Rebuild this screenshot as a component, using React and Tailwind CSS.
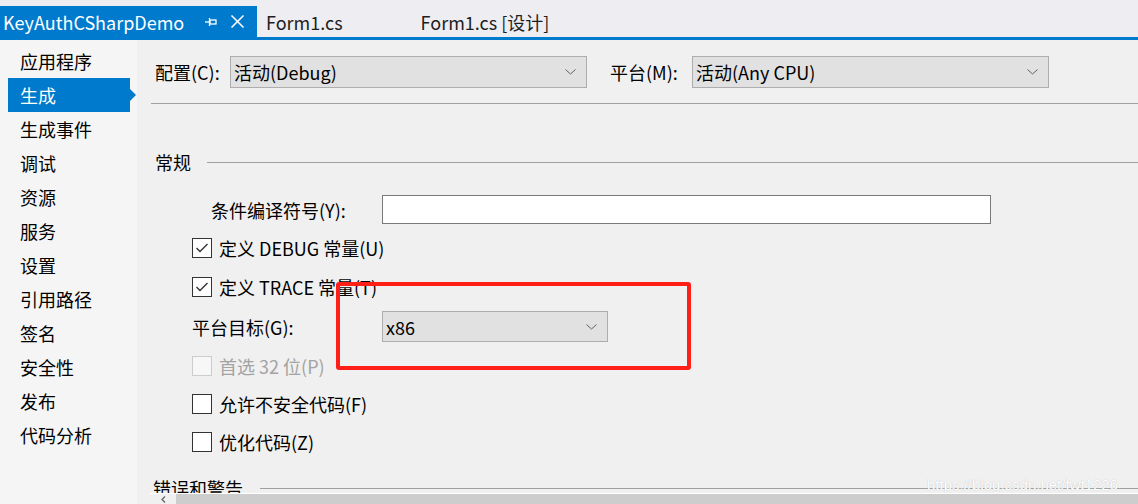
const font = { fontFamily: '"Noto Sans CJK SC", "Noto Sans", sans-serif' };

const navItems = ["应用程序", "生成", "生成事件", "调试", "资源", "服务", "设置", "引用路径", "签名", "安全性", "发布", "代码分析"];

function Chevron() {
  return (
    <svg width="11" height="6" viewBox="0 0 11 6" className="shrink-0">
      <polyline points="0.5,0.5 5.5,5 10.5,0.5" fill="none" stroke="#606060" strokeWidth="1" />
    </svg>
  );
}

function Dropdown({ value, width, height = 32 }) {
  return (
    <div
      className="flex items-center justify-between border border-[#adadad] bg-[#e1e1e1] pl-[3px] pr-[10px] text-[18px] text-black"
      style={{ width, height }}
    >
      <span className="leading-none">{value}</span>
      <Chevron />
    </div>
  );
}

function Checkbox({ checked, disabled, label }) {
  return (
    <div className="flex h-[20px] items-center pl-[55px]">
      <div
        className={
          disabled
            ? "flex h-[20px] w-[20px] items-center justify-center border border-[#cccccc] bg-[#f7f7f7]"
            : "flex h-[20px] w-[20px] items-center justify-center border border-[#333333] bg-white"
        }
      >
        {checked && (
          <svg width="14" height="12" viewBox="0 0 14 12">
            <polyline points="1.5,6 5,9.5 12.5,2" fill="none" stroke="#333333" strokeWidth="1.4" />
          </svg>
        )}
      </div>
      <span className={disabled ? "ml-[7px] text-[18px] leading-none text-[#a3a3a3]" : "ml-[7px] text-[18px] leading-none text-black"}>
        {label}
      </span>
    </div>
  );
}

export default function App() {
  return (
    <div className="relative flex h-[504px] w-[1138px] flex-col overflow-hidden bg-[#f0f0f0]" style={font}>
      {/* document tabs */}
      <div className="flex h-[37px] items-end bg-[#eeeef2]">
        <div className="flex h-[31px] w-[257px] items-center bg-[#007acc] pl-[3px] text-white">
          <span className="text-[18px] leading-none">KeyAuthCSharpDemo</span>
          <svg width="12" height="10" viewBox="0 0 12 10" className="ml-[21px]">
            <line x1="0" y1="5" x2="4" y2="5" stroke="white" strokeWidth="1.3" />
            <line x1="4.5" y1="1" x2="4.5" y2="9" stroke="white" strokeWidth="1.3" />
            <rect x="5" y="3" width="6" height="4" fill="none" stroke="white" strokeWidth="1.3" />
          </svg>
          <svg width="15" height="15" viewBox="0 0 15 15" className="ml-[13px]">
            <line x1="1.5" y1="1.5" x2="13.5" y2="13.5" stroke="white" strokeWidth="1.6" />
            <line x1="13.5" y1="1.5" x2="1.5" y2="13.5" stroke="white" strokeWidth="1.6" />
          </svg>
        </div>
        <div className="flex h-[31px] items-center pl-[9px] text-[18px] leading-none text-[#1e1e1e]">Form1.cs</div>
        <div className="flex h-[31px] items-center pl-[78px] text-[18px] leading-none text-[#1e1e1e]">Form1.cs [设计]</div>
      </div>
      <div className="h-[3px] bg-[#007acc]" />

      <div className="flex flex-1 overflow-hidden">
        {/* left navigation */}
        <div className="w-[137px] shrink-0 bg-[#f5f5f5] pt-[4px]">
          {navItems.map((item) =>
            item === "生成" ? (
              <div key={item} className="relative ml-[8px] flex h-[34px] w-[122px] items-center bg-[#007acc] pl-[12px] text-[18px] text-white">
                {item}
                <div className="absolute right-[-6px] top-[11px] h-0 w-0 border-y-[6px] border-l-[6px] border-y-transparent border-l-[#007acc]" />
              </div>
            ) : (
              <div key={item} className="flex h-[34px] items-center pl-[20px] text-[18px] text-black">
                {item}
              </div>
            )
          )}
        </div>

        {/* settings page */}
        <div className="flex flex-1 flex-col overflow-hidden">
          <div className="flex-1 overflow-hidden">
            <div className="flex items-center pl-[18px] pt-[16px] text-[18px] text-black">
              <span className="w-[75px] leading-none">配置(C):</span>
              <Dropdown value="活动(Debug)" width={357} />
              <span className="ml-[23px] w-[82px] leading-none">平台(M):</span>
              <Dropdown value="活动(Any CPU)" width={357} />
            </div>
            <div className="ml-[14px] mt-[15px] h-px bg-[#a0a0a0]" />

            <div className="mt-[46px] flex h-[24px] items-center pl-[18px]">
              <span className="text-[18px] leading-none text-black">常规</span>
              <div className="ml-[16px] h-px flex-1 bg-[#a0a0a0]" />
            </div>

            <div className="mt-[21px] flex h-[29px] items-center pl-[74px]">
              <span className="w-[171px] text-[18px] leading-none text-black">条件编译符号(Y):</span>
              <div className="h-[29px] w-[609px] border border-[#7a7a7a] bg-white" />
            </div>

            <div className="mt-[14px]">
              <Checkbox checked label="定义 DEBUG 常量(U)" />
            </div>
            <div className="mt-[19px]">
              <Checkbox checked label="定义 TRACE 常量(T)" />
            </div>

            <div className="mt-[14px] flex h-[31px] items-center pl-[55px]">
              <span className="w-[190px] text-[18px] leading-none text-black">平台目标(G):</span>
              <Dropdown value="x86" width={226} height={31} />
            </div>

            <div className="mt-[14px]">
              <Checkbox disabled label="首选 32 位(P)" />
            </div>
            <div className="mt-[18px]">
              <Checkbox label="允许不安全代码(F)" />
            </div>
            <div className="mt-[18px]">
              <Checkbox label="优化代码(Z)" />
            </div>

            <div className="mt-[24px] flex h-[24px] items-center pl-[16px]">
              <span className="text-[18px] leading-none text-black">错误和警告</span>
              <div className="ml-[17px] h-px flex-1 bg-[#a0a0a0]" />
            </div>
          </div>

          {/* horizontal scrollbar */}
          <div className="ml-[13px] flex h-[11px] border-t border-white">
            <div className="flex w-[26px] items-center justify-center bg-[#f0f0f0]">
              <svg width="5" height="7" viewBox="0 0 5 7">
                <polyline points="4,0.5 1,3.5 4,6.5" fill="none" stroke="#606060" strokeWidth="1.2" />
              </svg>
            </div>
            <div className="flex-1 bg-[#cdcdcd]" />
          </div>
        </div>
      </div>

      {/* red annotation box */}
      <div className="absolute left-[336px] top-[282px] h-[88px] w-[355px] rounded-[3px] border-[4px] border-[#ff1f17]" />

      {/* watermark */}
      <div
        className="absolute left-[927px] top-[477px] text-[15px] leading-none text-white"
        style={{ fontFamily: '"Liberation Sans", Arial, sans-serif', textShadow: "0 0 1px #b0b0b0" }}
      >
        https://blog.csdn.net/fwt1226
      </div>
    </div>
  );
}
